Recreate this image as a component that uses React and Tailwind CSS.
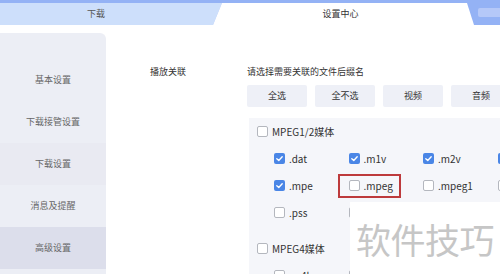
import React from "react";

const font = { fontFamily: '"Noto Sans CJK SC", "Noto Sans", sans-serif' };

function Box({ checked }) {
  if (checked) {
    return (
      <span className="w-[11px] h-[11px] rounded-[2px] bg-[#4a86e6] flex items-center justify-center shrink-0">
        <svg width="9" height="9" viewBox="0 0 10 10">
          <path d="M2 5.2 L4.2 7.3 L8 3" fill="none" stroke="#fff" strokeWidth="1.5" strokeLinecap="round" strokeLinejoin="round" />
        </svg>
      </span>
    );
  }
  return <span className="w-[11px] h-[11px] rounded-[2px] border border-[#b4b7be] bg-white shrink-0" />;
}

function Item({ label, checked }) {
  return (
    <div className="w-[74.5px] shrink-0 flex items-center gap-[4px] whitespace-nowrap">
      <Box checked={checked} />
      <span className="text-[10px] text-[#333] leading-none">{label}</span>
    </div>
  );
}

function Row({ items }) {
  return (
    <div className="h-[27px] flex items-center pl-[25px]">
      {items.map((it, i) => (
        <Item key={i} label={it[0]} checked={it[1]} />
      ))}
    </div>
  );
}

function GroupHead({ label }) {
  return (
    <div className="h-[27px] flex items-center pl-[8px] gap-[4px] whitespace-nowrap">
      <Box checked={false} />
      <span className="text-[10px] text-[#333] leading-none">{label}</span>
    </div>
  );
}

export default function App() {
  const side = ["基本设置", "下载接管设置", "下载设置", "消息及提醒", "高级设置"];
  return (
    <div className="w-[500px] h-[274px] overflow-hidden relative bg-white" style={font}>
      {/* header */}
      <div className="h-[25px] bg-[#94b2f5] flex relative">
        <div className="w-[222px] shrink-0 h-[22px] mt-[3px] bg-[#cddffb] [clip-path:polygon(0_0,100%_0,213px_100%,0_100%)] flex items-center justify-center">
          <span className="text-[9px] text-[#555] pr-[30px]">下载</span>
        </div>
        <div className="w-[261px] shrink-0 h-[22px] mt-[3px] ml-[-9px] bg-white [clip-path:polygon(9px_0,254px_0,100%_100%,0_100%)] flex items-center justify-center">
          <span className="text-[9px] text-[#333] pr-[6px]">设置中心</span>
        </div>
        <div className="absolute left-[478px] top-[8px] w-[24px] h-[9px] rounded-[2px] bg-[#b5c8f8]" />
      </div>

      {/* body */}
      <div className="flex">
        <div className="w-[106px] shrink-0 h-[245px] mt-[8px] bg-[#eceef5] rounded-tr-[6px] pt-[26px] flex flex-col">
          {side.map((s, i) => (
            <div
              key={s}
              className={
                "h-[42px] shrink-0 flex items-center justify-center text-[9px] text-[#666] whitespace-nowrap " +
                (i === 4 ? "bg-[#dcdeeb]" : i === 2 ? "bg-[#e9eaf2]" : "")
              }
            >
              {s}
            </div>
          ))}
        </div>

        <div className="flex-1 min-w-0 flex pt-[40px] pl-[44px]">
          <div className="w-[97px] shrink-0 h-[14px] flex items-center text-[9px] text-[#333] whitespace-nowrap">播放关联</div>
          <div className="flex-1 min-w-0 flex flex-col">
            <div className="h-[14px] flex items-center text-[9px] text-[#333] whitespace-nowrap">请选择需要关联的文件后缀名</div>
            <div className="flex gap-[8px] mt-[6px]">
              {["全选", "全不选", "视频", "音频"].map((b) => (
                <div key={b} className="w-[60px] h-[22px] shrink-0 bg-[#eef0f7] rounded-[2px] flex items-center justify-center text-[9px] text-[#333]">
                  {b}
                </div>
              ))}
            </div>
            <div className="mt-[11px] ml-[2px] w-[300px] bg-[#f5f6fa] h-[200px]">
              <GroupHead label="MPEG1/2媒体" />
              <Row items={[[".dat", true], [".m1v", true], [".m2v", true], ["", true]]} />
              <Row items={[[".mpe", true], [".mpeg", false], [".mpeg1", false], ["", false]]} />
              <Row items={[[".pss", false], ["", false]]} />
              <div className="mt-[9px]">
                <GroupHead label="MPEG4媒体" />
                <Row items={[[".m4b", false], ["", false]]} />
              </div>
            </div>
          </div>
        </div>
      </div>

      {/* annotation */}
      <div className="absolute left-[338px] top-[174px] w-[63px] h-[24px] border-2 border-[#bd3a3c]" />
      {/* watermark */}
      <div className="absolute left-[350px] top-[202px] w-[150px] h-[72px] bg-white flex items-center pl-[6px]">
        <span className="text-[35px] leading-none text-[#c6c6c6] tracking-[-0.5px] whitespace-nowrap">软件技巧</span>
      </div>
    </div>
  );
}
